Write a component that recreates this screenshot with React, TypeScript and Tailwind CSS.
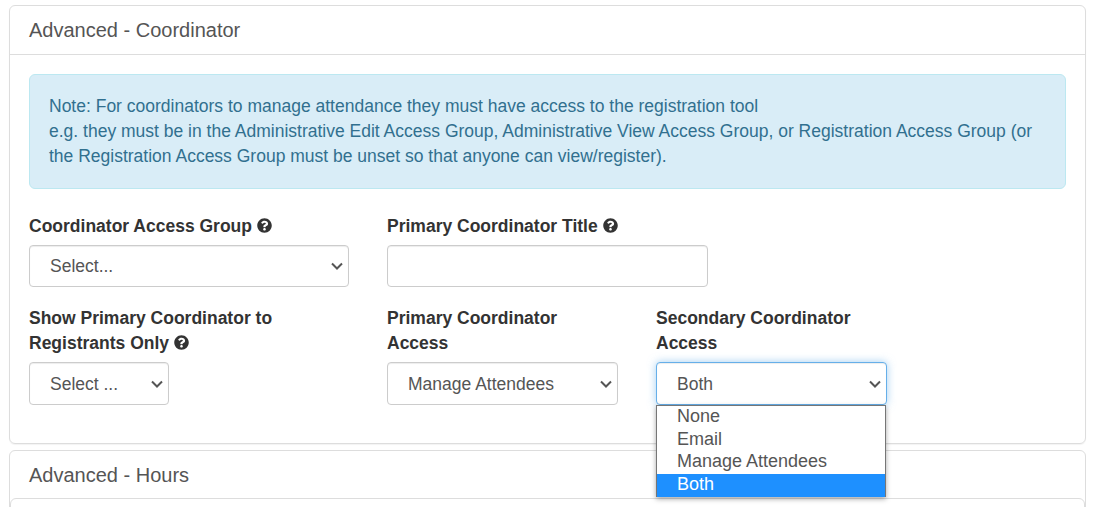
import React from "react";
import { FaQuestionCircle } from "react-icons/fa";

function Label({ children, help }: { children: React.ReactNode; help?: boolean }) {
  return (
    <label className="mb-[6px] block text-[17.5px] leading-[25px] font-bold text-[#333]">
      {children}
      {help && <FaQuestionCircle className="ml-[5px] inline-block size-[15px] align-[-1px] text-[#333]" />}
    </label>
  );
}

function Chevron() {
  return (
    <svg className="pointer-events-none absolute top-1/2 right-[6px] -mt-[4px] h-[8px] w-[12px]" viewBox="0 0 12 8" fill="none" stroke="#555" strokeWidth="2">
      <path d="M1 1.5 L6 6.5 L11 1.5" />
    </svg>
  );
}

function Select({ value }: { value: string }) {
  return (
    <div className="relative h-full">
      <select className="block h-full w-full appearance-none rounded-[4px] border border-[#ccc] bg-white pt-[1px] pl-[20px] text-[17.5px] text-[#555] outline-none shadow-[inset_0_1px_1px_rgba(0,0,0,0.075)]" defaultValue={value}>
        <option>{value}</option>
      </select>
      <Chevron />
    </div>
  );
}

export default function App() {
  return (
    <div className="h-[507px] overflow-hidden bg-white pt-[5px] pr-[7px] pl-[9px] font-['Liberation_Sans',Arial,sans-serif] text-[17.5px] leading-[25px] text-[#333]">
      <section className="h-[439px] rounded-[6px] border border-[#ddd] shadow-[0_1px_1px_rgba(0,0,0,0.05)]">
        <header className="h-[49px] border-b border-[#ddd] pt-[11px] pl-[19px] text-[20px] leading-[26px] text-[#555]">Advanced - Coordinator</header>
        <div className="px-[19px] pt-[19px]">
          <div className="h-[115px] rounded-[6px] border border-[#bce8f1] bg-[#d9edf7] px-[19px] pt-[19px] text-[#31708f]">
            Note: For coordinators to manage attendance they must have access to the registration tool
            <br />
            e.g. they must be in the Administrative Edit Access Group, Administrative View Access Group, or Registration Access Group (or the Registration Access Group must be unset so that anyone can view/register).
          </div>
          <div className="mt-[25px] flex gap-[38px]">
            <div className="w-[320px]">
              <Label help>Coordinator Access Group</Label>
              <div className="h-[42px]"><Select value="Select..." /></div>
            </div>
            <div className="w-[321px]">
              <Label help>Primary Coordinator Title</Label>
              <input className="block h-[42px] w-full rounded-[4px] border border-[#ccc] bg-white shadow-[inset_0_1px_1px_rgba(0,0,0,0.075)]" />
            </div>
          </div>
          <div className="mt-[19px] flex gap-[38px]">
            <div className="w-[320px]">
              <Label help>Show Primary Coordinator to Registrants Only</Label>
              <div className="h-[43px] w-[140px]"><Select value="Select ..." /></div>
            </div>
            <div className="w-[231px]">
              <Label>Primary Coordinator Access</Label>
              <div className="h-[43px]"><Select value="Manage Attendees" /></div>
            </div>
            <div className="relative w-[231px]">
              <Label>Secondary Coordinator Access</Label>
              <div className="relative h-[43px]">
                <select className="block h-[43px] w-full appearance-none rounded-[4px] border border-[#66afe9] bg-white pt-[1px] pl-[20px] text-[17.5px] text-[#555] outline-none shadow-[inset_0_1px_1px_rgba(0,0,0,0.075),0_0_8px_rgba(102,175,233,0.6)]" defaultValue="Both">
                  <option>Both</option>
                </select>
                <Chevron />
              </div>
              <ul className="absolute top-[99px] left-0 z-10 h-[92px] w-[230px] border border-b-0 border-[#767676] bg-white text-[18px] text-[#555] shadow-[0_2px_5px_rgba(0,0,0,0.35)]">
                <li className="h-[22.5px] pl-[20px] leading-[21px]">None</li>
                <li className="h-[22.5px] pl-[20px] leading-[21px]">Email</li>
                <li className="h-[22.5px] pl-[20px] leading-[21px]">Manage Attendees</li>
                <li className="h-[23px] bg-[#1e90ff] pl-[20px] leading-[21px] text-white">Both</li>
              </ul>
            </div>
          </div>
        </div>
      </section>
      <section className="mt-[6px] h-[200px] rounded-[6px] border border-[#ddd]">
        <header className="h-[47px] pt-[11px] pl-[19px] text-[20px] leading-[26px] text-[#555]">Advanced - Hours</header>
        <div className="h-[100px] rounded-[6px] border border-[#ddd]" />
      </section>
    </div>
  );
}
